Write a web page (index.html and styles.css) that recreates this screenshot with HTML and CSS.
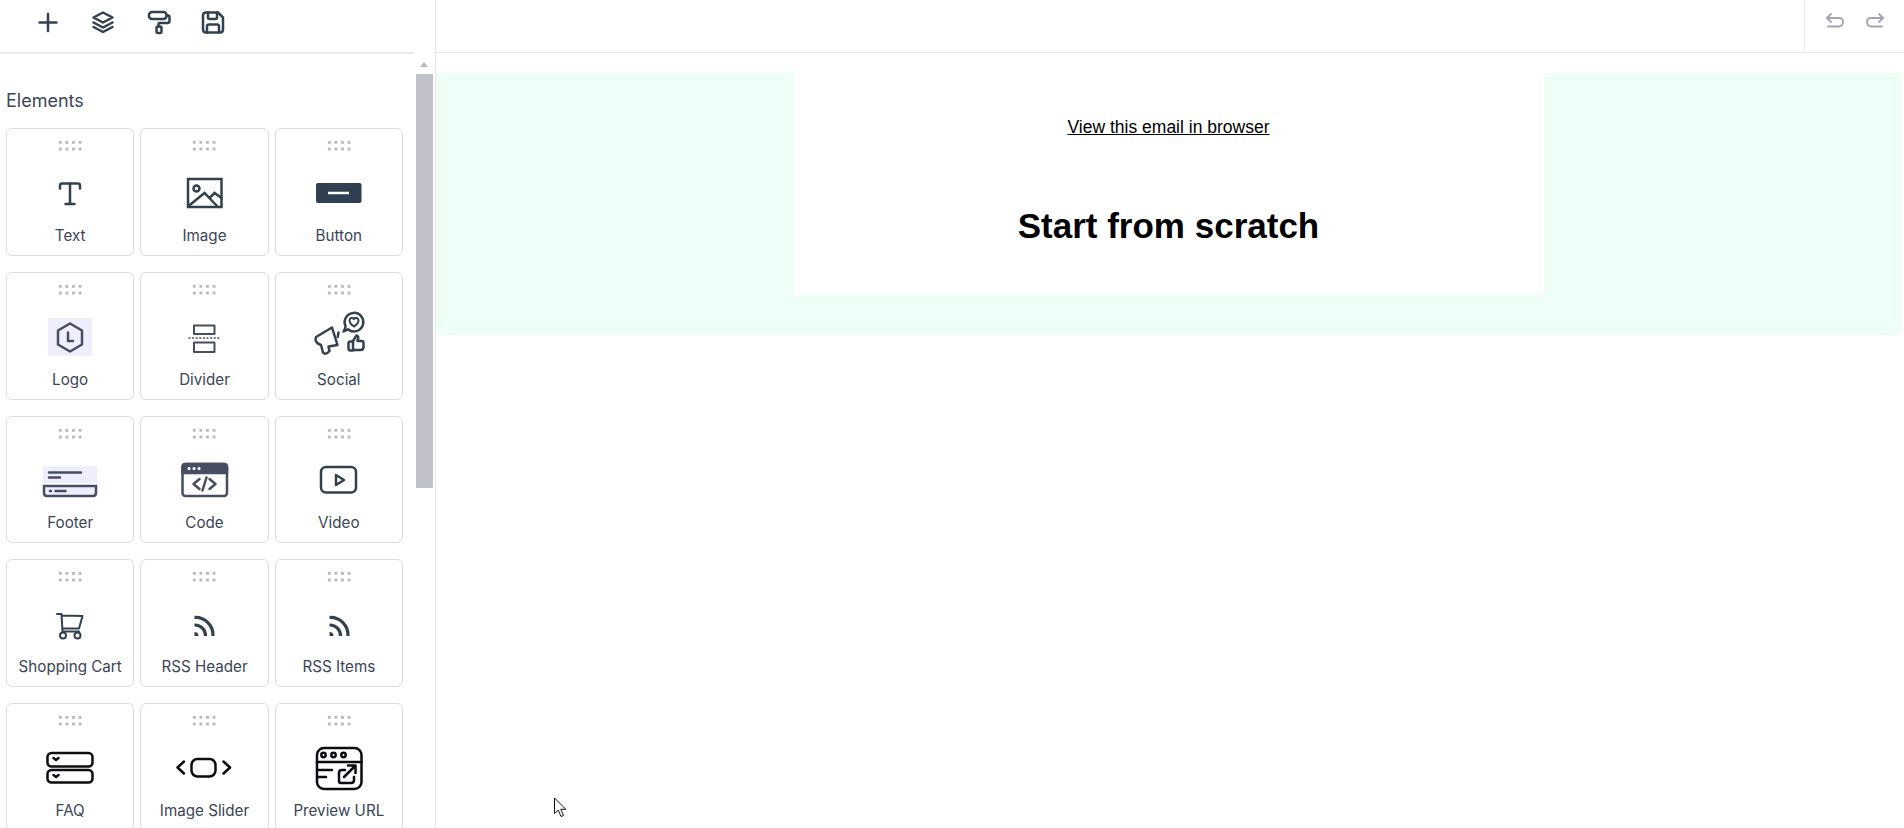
FILE: index.html
```html
<!DOCTYPE html>
<html lang="en">
<head>
    <meta charset="UTF-8">
    <meta name="viewport" content="width=device-width, initial-scale=1.0">
    <title>Email Builder</title>
    <link rel="stylesheet" href="styles.css">
</head>
<body>
    <div class="app">
        <!-- Left panel -->
        <aside class="sidebar">
            <div class="toolbar">
                <svg class="tool ico" viewBox="0 0 28 28"><path d="M14 6v17M5.500 14.500h17"/></svg>
                <svg class="tool ico" viewBox="0 0 28 28"><path d="M14 4.500l-9.500 5 9.500 5 9.500-5z"/><path d="M4.500 14.500l9.500 5 9.500-5"/><path d="M4.500 19l9.500 5 9.500-5"/></svg>
                <svg class="tool ico roller" viewBox="0 0 28 28"><rect x="3.500" y="4" width="17.500" height="7" rx="3"/><path d="M21 7.500h1.500q1.500 0 1.500 1.500v4q0 2-2 2h-8q-1 0-1 1v2.500"/><rect x="11" y="18.500" width="5" height="6.500" rx="1.500"/></svg>
                <svg class="tool ico" viewBox="0 0 28 28"><path d="M7 4.500h12l5 5v12q0 3-3 3H7q-3 0-3-3v-14q0-3 3-3z"/><path d="M9 4.500v5q0 1.500 1.500 1.500h6q1.500 0 1.500-1.500v-5"/><path d="M8 24.500v-6q0-2 2-2h8q2 0 2 2v6"/></svg>
            </div>
            <div class="panel">
                <div class="panel-body">
                    <h2 class="panel-title">Elements</h2>
                    <div class="element-grid">
                        <div class="card">
                            <div class="drag"></div>
                            <svg class="icon ico" viewBox="0 0 56 56"><path d="M18 23.500v-3q0-2 2-2h16q2 0 2 2v3"/><path d="M28 18.500v20M23.500 39h9"/></svg>
                            <div class="label">Text</div>
                        </div>
                        <div class="card">
                            <div class="drag"></div>
                            <svg class="icon ico" viewBox="0 0 56 56"><path class="sharp" d="M12 14h33.500v28H12z"/><circle cx="20.500" cy="23.500" r="3"/><path class="sharp" d="M12.500 41l16-13 12.500 13M33.500 33l5-5 7 5"/></svg>
                            <div class="label">Image</div>
                        </div>
                        <div class="card">
                            <div class="drag"></div>
                            <svg class="icon" viewBox="0 0 56 56"><rect class="solid" x="5" y="18" width="45.500" height="20" rx="2"/><path class="knock" d="M17 28h21"/></svg>
                            <div class="label">Button</div>
                        </div>

                        <div class="card">
                            <div class="drag"></div>
                            <svg class="icon ico muted" viewBox="0 0 56 56"><rect class="tint" x="6" y="9" width="44" height="38" rx="1"/><path d="M28 14.500l12 7v14l-12 7-12-7v-14z"/><path d="M26 23.500v8.500h5"/></svg>
                            <div class="label">Logo</div>
                        </div>
                        <div class="card">
                            <div class="drag"></div>
                            <svg class="icon ico muted thin" viewBox="0 0 56 56"><rect x="18" y="16.500" width="20.500" height="8.500"/><rect x="18" y="33.500" width="20.500" height="9.500"/><path class="dash" d="M12.500 29h32"/></svg>
                            <div class="label">Divider</div>
                        </div>
                        <div class="card">
                            <div class="drag"></div>
                            <svg class="icon ico" viewBox="0 0 56 56"><path d="M5 28l16-9.500 5.500 17.500-9 1.500 1 4.500q-4 4.500-6.500 1.500l-2-7.500q-7-2.500-5-8z"/><path d="M27.500 23.500l-.8 4.500"/><path d="M32.500 22.500L37 20.300A9.300 9.300 0 1 0 34.500 17q.2 3-2 5.500z"/><path class="thin" d="M43 17.500q-4.500-3-4.500-6c0-2.800 3-3.200 4.500-1.500 1.500-1.700 4.500-1.300 4.500 1.500q0 3-4.500 6z"/><path d="M42 32l3.500-5.500q2.500.5 1.500 3.500l-.5 2h4q2 0 2 2v4q0 3-3 3h-7.500zM42 32.500h-2.500q-2 0-2 2v5q0 2 2 2H42"/></svg>
                            <div class="label">Social</div>
                        </div>

                        <div class="card">
                            <div class="drag"></div>
                            <svg class="icon ico muted" viewBox="0 0 56 56"><rect class="tint" x="1" y="14" width="54" height="17"/><path d="M7 20.500h32M7 25.500h11"/><path class="tint sharp" d="M2 34h52v7q0 3-3 3H5q-3 0-3-3z"/><path d="M8 39h1M13.500 39h10"/></svg>
                            <div class="label">Footer</div>
                        </div>
                        <div class="card">
                            <div class="drag"></div>
                            <svg class="icon ico muted" viewBox="0 0 56 56"><rect x="6.500" y="12" width="44.500" height="32" rx="3"/><path class="fill-muted" d="M6.500 21v-6q0-3 3-3h38.500q3 0 3 3v6z"/><path class="dots" d="M13 16.500h.1M18 16.500h.1M23 16.500h.1"/><path d="M23.500 27l-6 5 6 5M33.500 27l6 5-6 5M30.500 25.500l-4 13"/></svg>
                            <div class="label">Code</div>
                        </div>
                        <div class="card">
                            <div class="drag"></div>
                            <svg class="icon ico" viewBox="0 0 56 56"><rect x="10" y="15" width="35" height="25.500" rx="5"/><path d="M25 23l8 5-8 5z"/></svg>
                            <div class="label">Video</div>
                        </div>

                        <div class="card">
                            <div class="drag"></div>
                            <svg class="icon ico thin" viewBox="0 0 56 56"><path d="M15 18h4.500l1 17.500H37M20 19.500l20.500.5-3.500 12.500H20.500"/><circle cx="21" cy="39.500" r="3"/><circle cx="35.500" cy="39.500" r="3"/></svg>
                            <div class="label">Shopping Cart</div>
                        </div>
                        <div class="card">
                            <div class="drag"></div>
                            <svg class="icon ico wide" viewBox="0 0 56 56"><path d="M18.500 21.500A17.500 17.500 0 0 1 37 40M18.500 29A10.500 10.500 0 0 1 29.500 40"/><path class="fill-dark" d="M18.500 36a4 4 0 0 1 4 4h-4z"/></svg>
                            <div class="label">RSS Header</div>
                        </div>
                        <div class="card">
                            <div class="drag"></div>
                            <svg class="icon ico wide" viewBox="0 0 56 56"><path d="M18.500 21.500A17.500 17.500 0 0 1 37 40M18.500 29A10.500 10.500 0 0 1 29.500 40"/><path class="fill-dark" d="M18.500 36a4 4 0 0 1 4 4h-4z"/></svg>
                            <div class="label">RSS Items</div>
                        </div>

                        <div class="card">
                            <div class="drag"></div>
                            <svg class="icon ico black" viewBox="0 0 56 56"><rect x="5.500" y="13" width="45" height="13.500" rx="4"/><rect x="5.500" y="30" width="45" height="12.500" rx="4"/><path d="M11.500 18l2.500 2 2.500-2M11.500 35l2.500 2 2.500-2"/></svg>
                            <div class="label">FAQ</div>
                        </div>
                        <div class="card">
                            <div class="drag"></div>
                            <svg class="icon ico black" viewBox="0 0 56 56"><path d="M8 21.500l-6.500 6 6.500 6M47.500 21.500l6.500 6-6.500 6"/><rect x="15.500" y="19" width="24" height="17.500" rx="6"/></svg>
                            <div class="label">Image Slider</div>
                        </div>
                        <div class="card">
                            <div class="drag"></div>
                            <svg class="icon ico black" viewBox="0 0 56 56"><rect x="6" y="8" width="44.500" height="41" rx="7"/><path d="M6 22h44.500"/><circle cx="12.500" cy="15" r="2.200"/><circle cx="22.500" cy="15" r="2.200"/><circle cx="32.500" cy="15" r="2.200"/><path d="M6 30h15M6 37h9"/><path d="M34 30h-3q-3 0-3 3v8q0 2 2 2h10q3 0 3-3v-3"/><path d="M33 37l11-11M37 25.500h7.500v7.500"/></svg>
                            <div class="label">Preview URL</div>
                        </div>
                    </div>
                </div>
                <div class="scrollbar">
                    <div class="scroll-arrow"></div>
                    <div class="scroll-thumb"></div>
                </div>
            </div>
        </aside>

        <!-- Email preview -->
        <main class="main">
            <div class="topbar">
                <div class="history">
                    <svg class="history-icon" viewBox="0 0 22 22"><path d="M7 3L3 7l4 4"/><path d="M3 7h12q4 0 4 4t-4 4.500H4"/></svg>
                    <svg class="history-icon" viewBox="0 0 22 22"><path d="M15 3l4 4-4 4"/><path d="M19 7H7q-4 0-4 4t4 4.500h11"/></svg>
                </div>
            </div>
            <div class="canvas">
                <div class="email-bg">
                    <div class="email-body">
                        <a class="browser-link" href="#">View this email in browser</a>
                        <h1 class="email-title">Start from scratch</h1>
                    </div>
                </div>
            </div>
        </main>
    </div>

    <svg class="cursor" viewBox="0 0 16 22"><path d="M1.500 1v15.500l3.800-3.300 2.700 6.300 2.500-1-2.700-6.200h5z"/></svg>
</body>
</html>
```

FILE: styles.css
```css
/* General Styling */
* {
    box-sizing: border-box;
}
body {
    margin: 0;
    height: 100vh;
    overflow: hidden;
    background: #fff;
    font-family: Inter, "Liberation Sans", sans-serif;
    color: #3b4557;
}
.app {
    display: flex;
    height: 100vh;
}

/* Sidebar */
.sidebar {
    width: 436px;
    flex-shrink: 0;
    border-right: 1px solid #e9e6ea;
    overflow: hidden;
}
.toolbar {
    display: flex;
    gap: 27px;
    height: 54px;
    width: 414px;
    padding: 8px 0 0 34px;
    border-bottom: 2px solid #eee9ee;
}
.tool {
    width: 28px;
    height: 28px;
}
.roller {
    transform: translateX(1.5px);
}
.panel {
    display: flex;
}
.panel-body {
    width: 416px;
    padding: 0 13px 0 6px;
}
.panel-title {
    margin: 37px 0 17px;
    font-size: 18px;
    font-weight: 400;
    line-height: 20px;
}
.element-grid {
    display: grid;
    grid-template-columns: repeat(3, 1fr);
    gap: 16px 6px;
}
.card {
    display: flex;
    flex-direction: column;
    align-items: center;
    height: 127.75px;
    border: 1px solid #dedddb;
    border-radius: 6px;
}
.drag {
    width: 26.4px;
    height: 13.4px;
    margin-top: 10px;
    flex-shrink: 0;
    background: radial-gradient(circle, #b9b9c5 1.4px, transparent 1.8px) 0 0 / 6.6px 6.7px;
}
.icon {
    width: 56px;
    height: 56px;
    margin-top: 12.5px;
    flex-shrink: 0;
}
.label {
    margin-top: 5px;
    font-size: 15.2px;
    line-height: 20px;
    white-space: nowrap;
}

/* Icons */
.ico {
    fill: none;
    stroke: #33414f;
    stroke-width: 2.5;
    stroke-linecap: round;
    stroke-linejoin: round;
}
.muted {
    stroke: #474d62;
}
.black {
    stroke: #0b0d12;
}
.thin {
    stroke-width: 2;
}
.wide {
    stroke-width: 3.2;
    stroke-linecap: butt;
}
.sharp {
    stroke-linejoin: miter;
}
.solid {
    fill: #2f4053;
}
.knock {
    stroke: #fff;
    stroke-width: 2.5;
}
.tint {
    fill: #eeeefc;
    stroke: none;
}
.tint.sharp {
    stroke: #474d62;
}
.dash {
    stroke-width: 1.6;
    stroke-linecap: butt;
    stroke-dasharray: 2 1.6;
}
.fill-muted {
    fill: #474d62;
}
.fill-dark {
    fill: #33414f;
    stroke: none;
}
.dots {
    stroke: #fff;
    stroke-width: 3;
}

/* Scrollbar */
.scrollbar {
    width: 19px;
    padding-top: 8px;
}
.scroll-arrow {
    width: 0;
    margin: 0 0 7px 4px;
    border: 4.500px solid transparent;
    border-top: 0;
    border-bottom: 5px solid #b9b9bf;
}
.scroll-thumb {
    width: 17px;
    height: 414px;
    background: #c1c1c9;
}

/* Main area */
.main {
    flex: 1;
    min-width: 0;
}
.topbar {
    display: flex;
    justify-content: flex-end;
    height: 53px;
    border-bottom: 1px solid #e9e6ea;
}
.history {
    display: flex;
    gap: 18px;
    height: 52px;
    padding: 11px 18px 0 19px;
    border-left: 1px solid #eeebee;
}
.history-icon {
    width: 22px;
    height: 22px;
    fill: none;
    stroke: #a3a3b5;
    stroke-width: 1.8;
    stroke-linecap: round;
    stroke-linejoin: round;
}
.canvas {
    padding: 20px 3px 0 0;
}
.email-bg {
    padding-bottom: 40px;
    background: #eefff8;
}
.email-body {
    width: 750px;
    height: 222px;
    margin: 0 auto;
    padding-top: 44px;
    background: #fff;
    text-align: center;
    font-family: "Liberation Sans", Arial, sans-serif;
    color: #000;
}
.browser-link {
    font-size: 17.5px;
    line-height: 21px;
    color: #000;
}
.email-title {
    margin: 67px 0 0;
    font-size: 35px;
    line-height: 41px;
    font-weight: 700;
}

/* Mouse pointer in the capture */
.cursor {
    position: absolute;
    left: 553px;
    top: 797px;
    width: 16px;
    height: 22px;
    fill: #fff;
    stroke: #111;
    stroke-width: 1;
}
```
